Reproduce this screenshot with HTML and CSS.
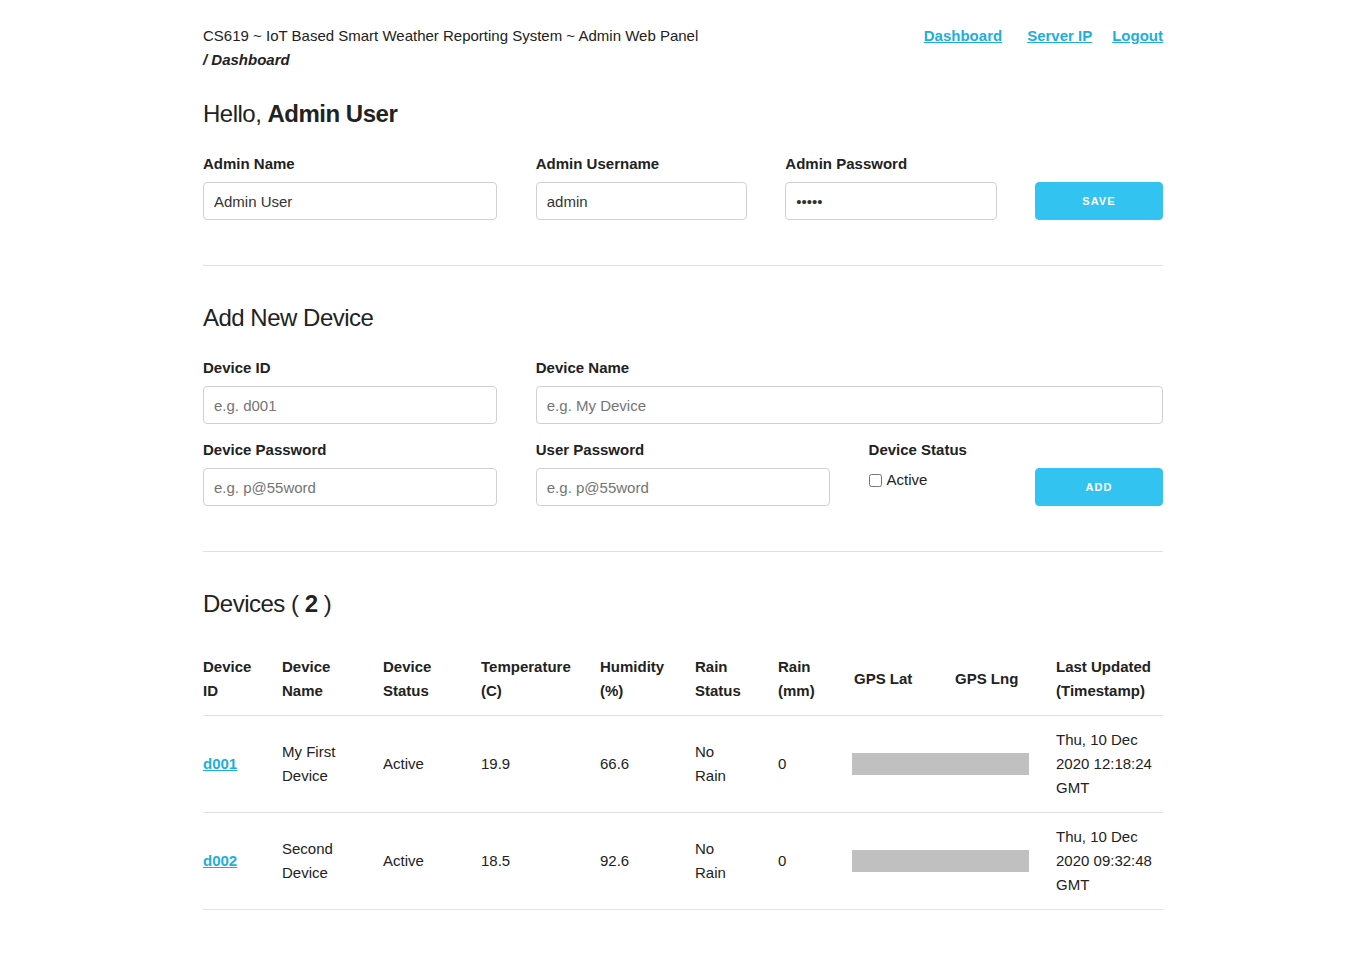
FILE: index.html
```html
<!DOCTYPE html>
<html lang="en">
<head>
<meta charset="utf-8">
<title>Admin Web Panel</title>
<link rel="stylesheet" href="styles.css">
</head>
<body>
<div class="container">
  <header class="top">
    <div class="brand">
      <div>CS619 ~ IoT Based Smart Weather Reporting System ~ Admin Web Panel</div>
      <div class="crumb">/ Dashboard</div>
    </div>
    <nav class="nav">
      <a href="#" class="nav-first">Dashboard</a>
      <a href="#">Server IP</a>
      <a href="#">Logout</a>
    </nav>
  </header>

  <h5 class="heading heading-first">Hello, <strong>Admin User</strong></h5>
  <div class="row">
    <div class="col c4">
      <label class="lbl">Admin Name</label>
      <input class="field" type="text" value="Admin User">
    </div>
    <div class="col c3">
      <label class="lbl">Admin Username</label>
      <input class="field" type="text" value="admin">
    </div>
    <div class="col c3">
      <label class="lbl">Admin Password</label>
      <input class="field" type="password" value="admin">
    </div>
    <div class="col c2 col-end">
      <button class="btn">Save</button>
    </div>
  </div>

  <hr class="sep">

  <h5 class="heading">Add New Device</h5>
  <div class="row">
    <div class="col c4">
      <label class="lbl">Device ID</label>
      <input class="field" type="text" placeholder="e.g. d001">
    </div>
    <div class="col c8">
      <label class="lbl">Device Name</label>
      <input class="field" type="text" placeholder="e.g. My Device">
    </div>
  </div>
  <div class="row">
    <div class="col c4">
      <label class="lbl">Device Password</label>
      <input class="field" type="text" placeholder="e.g. p@55word">
    </div>
    <div class="col c4">
      <label class="lbl">User Password</label>
      <input class="field" type="text" placeholder="e.g. p@55word">
    </div>
    <div class="col c2">
      <label class="lbl">Device Status</label>
      <label class="check"><input type="checkbox" class="cb"><span class="check-text">Active</span></label>
    </div>
    <div class="col c2 col-end">
      <button class="btn">Add</button>
    </div>
  </div>

  <hr class="sep">

  <h5 class="heading heading-table">Devices ( <strong>2</strong> )</h5>
  <table class="devices">
    <colgroup>
      <col class="w1"><col class="w2"><col class="w3"><col class="w4"><col class="w5">
      <col class="w6"><col class="w7"><col class="w8"><col class="w9"><col class="w10">
    </colgroup>
    <thead>
      <tr>
        <th>Device ID</th>
        <th>Device Name</th>
        <th>Device Status</th>
        <th>Temperature (C)</th>
        <th>Humidity (%)</th>
        <th>Rain Status</th>
        <th>Rain (mm)</th>
        <th>GPS Lat</th>
        <th>GPS Lng</th>
        <th>Last Updated (Timestamp)</th>
      </tr>
    </thead>
    <tbody>
      <tr>
        <td><a href="#" class="dev-link">d001</a></td>
        <td>My First Device</td>
        <td>Active</td>
        <td>19.9</td>
        <td>66.6</td>
        <td>No<br>Rain</td>
        <td>0</td>
        <td colspan="2" class="map-cell"><div class="map"></div></td>
        <td>Thu, 10 Dec 2020 12:18:24 GMT</td>
      </tr>
      <tr>
        <td><a href="#" class="dev-link">d002</a></td>
        <td>Second Device</td>
        <td>Active</td>
        <td>18.5</td>
        <td>92.6</td>
        <td>No<br>Rain</td>
        <td>0</td>
        <td colspan="2" class="map-cell"><div class="map"></div></td>
        <td>Thu, 10 Dec 2020 09:32:48 GMT</td>
      </tr>
    </tbody>
  </table>
</div>
</body>
</html>
```

FILE: styles.css
```css
html, body {
  margin: 0;
  padding: 0;
  background: #fff;
}
body {
  font-family: "Liberation Sans", Arial, Helvetica, sans-serif;
  font-size: 15px;
  line-height: 24px;
  color: #222;
}
.container {
  width: 960px;
  margin: 0 auto;
  padding-bottom: 30px;
}
.top {
  display: flex;
  justify-content: space-between;
  align-items: flex-start;
  padding-top: 24px;
}
.crumb {
  font-weight: bold;
  font-style: italic;
}
.nav {
  display: flex;
  gap: 20px;
}
.nav a {
  color: #1EAEDB;
  font-weight: bold;
  text-decoration: underline;
}
.nav .nav-first {
  margin-right: 5px;
}
.heading {
  font-size: 24px;
  line-height: 36px;
  letter-spacing: -0.5px;
  font-weight: normal;
  margin: 0 0 20px 0;
  color: #222;
}
.heading strong {
  font-weight: bold;
}
.heading-first {
  margin-top: 24px;
}
.heading-table {
  margin-bottom: 21px;
}
.row {
  display: flex;
  gap: 4%;
}
.col {
  display: flex;
  flex-direction: column;
}
.col-end {
  justify-content: flex-end;
}
.c2 { width: 13.3333%; }
.c3 { width: 22%; }
.c4 { width: 30.6667%; }
.c8 { width: 65.3333%; }
.lbl {
  display: block;
  font-weight: bold;
  margin-bottom: 6px;
}
.field {
  box-sizing: border-box;
  width: 100%;
  height: 38px;
  padding: 6px 10px;
  border: 1px solid #D1D1D1;
  border-radius: 4px;
  background: #fff;
  font-family: "Liberation Sans", Arial, Helvetica, sans-serif;
  font-size: 15px;
  color: #333;
  margin: 0 0 14px 0;
  outline: none;
}
.field::placeholder {
  color: #757575;
}
.btn {
  box-sizing: border-box;
  width: 100%;
  height: 38px;
  margin: 0 0 14px 0;
  padding: 0 30px;
  background: #33C3F0;
  border: 1px solid #33C3F0;
  border-radius: 4px;
  color: #fff;
  font-family: "Liberation Sans", Arial, Helvetica, sans-serif;
  font-size: 11px;
  font-weight: bold;
  letter-spacing: 1px;
  text-transform: uppercase;
  line-height: 36px;
}
.check {
  display: flex;
  align-items: center;
  height: 24px;
}
.cb {
  margin: 0;
  width: 13px;
  height: 13px;
}
.check-text {
  margin-left: 5px;
}
.sep {
  border: 0;
  border-top: 1px solid #E1E1E1;
  margin: 31px 0 34px 0;
  height: 0;
}
.devices {
  width: 100%;
  border-collapse: collapse;
  table-layout: fixed;
}
.devices th,
.devices td {
  text-align: left;
  padding: 12px 15px;
  border-bottom: 1px solid #E1E1E1;
  vertical-align: middle;
}
.devices th {
  font-weight: bold;
}
.devices th:first-child,
.devices td:first-child {
  padding-left: 0;
}
.devices th:last-child,
.devices td:last-child {
  padding-right: 0;
}
.w1 { width: 64px; }
.w2 { width: 101px; }
.w3 { width: 98px; }
.w4 { width: 119px; }
.w5 { width: 95px; }
.w6 { width: 83px; }
.w7 { width: 76px; }
.w8 { width: 101px; }
.w9 { width: 101px; }
.w10 { width: 122px; }
.devices td.map-cell {
  padding: 12px 12px 12px 13px;
}
.map {
  height: 22px;
  background: #C0C0C0;
}
.dev-link {
  color: #1EAEDB;
  font-weight: bold;
  text-decoration: underline;
}
```
